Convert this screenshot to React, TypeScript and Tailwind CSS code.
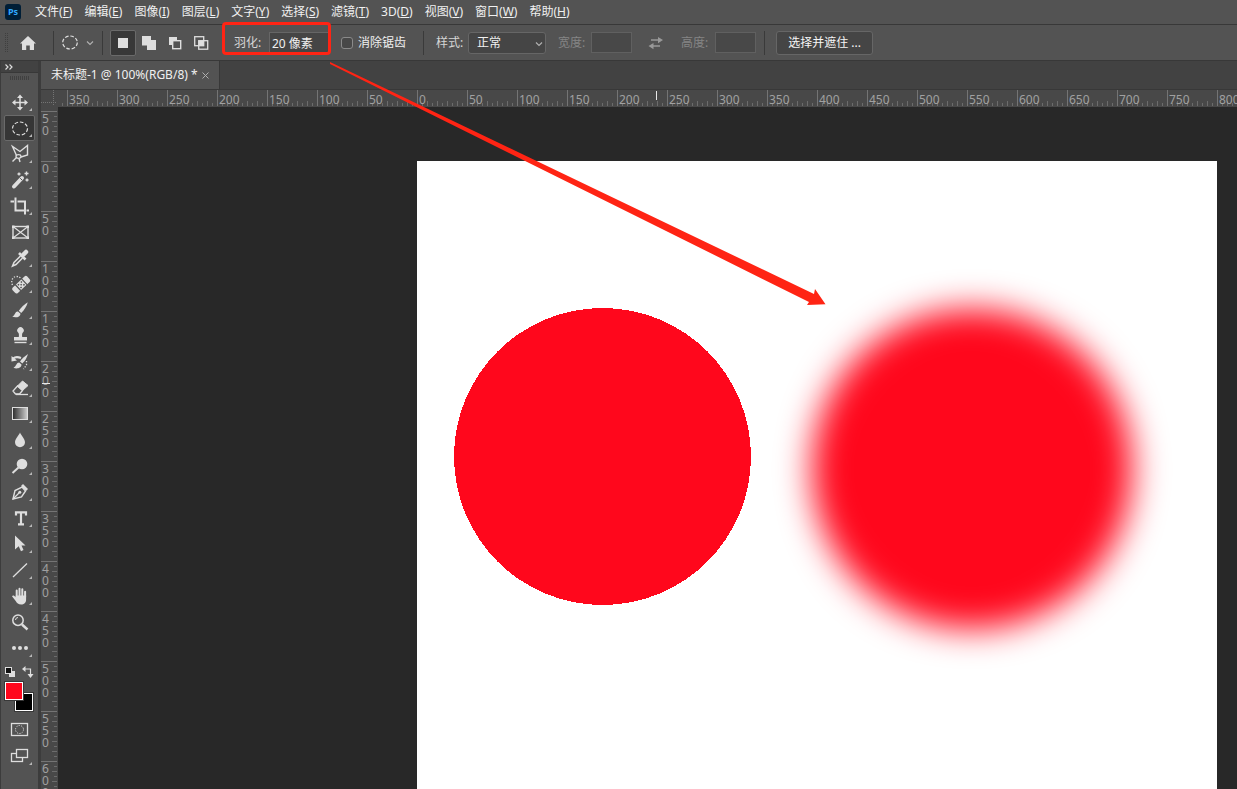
import { useState } from 'react';
import type { ReactNode } from 'react';

// Types
interface MenuEntry {
  label: string;
  hotkey: string;
}

interface Tool {
  id: string;
  title: string;
  icon: ReactNode;
  single?: boolean;
}

const menus: MenuEntry[] = [
  { label: '文件', hotkey: 'F' },
  { label: '编辑', hotkey: 'E' },
  { label: '图像', hotkey: 'I' },
  { label: '图层', hotkey: 'L' },
  { label: '文字', hotkey: 'Y' },
  { label: '选择', hotkey: 'S' },
  { label: '滤镜', hotkey: 'T' },
  { label: '3D', hotkey: 'D' },
  { label: '视图', hotkey: 'V' },
  { label: '窗口', hotkey: 'W' },
  { label: '帮助', hotkey: 'H' },
];

// Every icon is drawn on a 24x24 grid, stroke and fill come from the parent svg
const tools: Tool[] = [
  {
    id: 'move',
    title: '移动工具',
    icon: (
      <>
        <path d="M12 6v13M5.500 12.500h13" strokeWidth="1.500" />
        <path d="M12 4.500l3 3.500H9zM12 20.500l3-3.500H9zM4 12.500L7.500 9.500v6zM20 12.500l-3.500-3v6z" fill="currentColor" stroke="none" />
      </>
    ),
  },
  {
    id: 'marquee',
    title: '椭圆选框工具',
    icon: <ellipse cx="12" cy="12.500" rx="7.500" ry="6.500" strokeDasharray="3.600 1.800" strokeWidth="1.200" />,
  },
  {
    id: 'lasso',
    title: '多边形套索工具',
    icon: (
      <>
        <path d="M8.500 13.500L4.500 4.500 12 9.500l7.500-6v9.500L13 15" strokeWidth="1.400" />
        <ellipse cx="10.500" cy="14.500" rx="2.500" ry="1.800" strokeWidth="1.300" />
        <path d="M8.500 15.500l-4 4M11 16.500l1 3.500" strokeWidth="1.400" />
      </>
    ),
  },
  {
    id: 'wand',
    title: '魔棒工具',
    icon: (
      <>
        <path d="M6 18.500l8-8.500" strokeWidth="4" strokeLinecap="round" />
        <path d="M12.200 10.200l1.800 1.800" stroke="#535353" />
        <path d="M11 4.500v3M9.500 6h3M18.500 3.500v4M16.500 5.500h4M19 10.500v3M17.500 12h3" strokeWidth="1.400" />
      </>
    ),
  },
  {
    id: 'crop',
    title: '裁剪工具',
    icon: <path d="M2.500 7.500h3.500M7.500 3.500v13h8.500M9.500 7.500h7.500v13M18.500 16.500H21" strokeWidth="2" />,
  },
  {
    id: 'frame',
    title: '图框工具',
    single: true,
    icon: (
      <>
        <rect x="5" y="6.500" width="15" height="11.500" strokeWidth="1.400" />
        <path d="M5 6.500l15 11.500M20 6.500L5 18" strokeWidth="1.200" />
        <path d="M4 5.500h2.500v2.500H4zM18.500 5.500H21v2.500h-2.500zM4 16.500h2.500V19H4zM18.500 16.500H21V19h-2.500z" fill="currentColor" stroke="none" />
      </>
    ),
  },
  {
    id: 'eyedropper',
    title: '吸管工具',
    icon: (
      <>
        <path d="M15.500 8.500l2.500-2.500" strokeWidth="4.500" strokeLinecap="round" />
        <path d="M11 7l6.500 6.500" strokeWidth="2.600" />
        <path d="M12.500 10L6 16.500 4.500 20 8 18.500l6.500-6.500" strokeWidth="1.500" />
      </>
    ),
  },
  {
    id: 'healing',
    title: '污点修复画笔工具',
    icon: (
      <>
        <g transform="rotate(-43 13 12.500)">
          <rect x="3" y="9" width="20" height="7.500" rx="2" fill="currentColor" stroke="none" />
          <path d="M8.700 8.500v8.500M17.300 8.500v8.500" stroke="#535353" strokeWidth="1.200" />
          <path d="M10.200 10.200h1.500v1.500h-1.500zM14.200 10.200h1.500v1.500h-1.500zM12.200 12h1.500v1.500h-1.500zM10.200 14h1.500v1.500h-1.500zM14.200 14h1.500v1.500h-1.500z" fill="#535353" stroke="none" />
        </g>
        <path d="M4.500 13C2.500 9.500 4.500 4.500 8.500 4.500c2 0 3 .500 4 1.500" strokeDasharray="1.300 1.500" strokeWidth="1.300" />
      </>
    ),
  },
  {
    id: 'brush',
    title: '画笔工具',
    icon: (
      <>
        <path d="M19.800 4.200c-3.300 2-7 5.300-9 8.600l2.400 2.200c3-2.800 5.500-6.800 6.600-10.800z" fill="currentColor" stroke="none" />
        <path d="M10 13.500c-3.200-.300-2.300 3.500-5.800 5 3 1.700 8.300.800 8.300-2.800z" fill="currentColor" stroke="none" />
      </>
    ),
  },
  {
    id: 'stamp',
    title: '仿制图章工具',
    icon: (
      <>
        <path d="M10.500 9a3.200 3.200 0 1 1 4 0c-.500 1-.500 2-.300 4H19v3.500H6V13h4.800c.200-2 .2-3-.3-4z" fill="currentColor" stroke="none" />
        <path d="M6.500 18.500h12" strokeWidth="1.400" />
      </>
    ),
  },
  {
    id: 'history',
    title: '历史记录画笔工具',
    icon: (
      <>
        <path d="M20 4c-3 2-6.500 5-8 7.500l2.300 2C17 11 19 7.500 20 4z" fill="currentColor" stroke="none" />
        <path d="M11.200 12.500c-3 0-2.500 3.500-5.700 5.300 3.200 1.400 8 .4 8-3.300z" fill="currentColor" stroke="none" />
        <path d="M5 8.500c2.500-2 5.500-1.500 8-.500" strokeWidth="2" />
        <path d="M3.500 6v5.500l5.500-1z" fill="currentColor" stroke="none" />
        <path d="M18.500 11v4l-3 4" strokeDasharray="1.300 1.500" strokeWidth="1.300" />
      </>
    ),
  },
  {
    id: 'eraser',
    title: '橡皮擦工具',
    icon: (
      <>
        <path d="M9.500 10l5-5 5.500 4.500-5.500 5z" fill="currentColor" />
        <path d="M9.500 10l5 4.500-3 3.500H7.500L5 15z" strokeWidth="1.300" />
        <path d="M8 18.500h12" strokeWidth="1.300" />
      </>
    ),
  },
  {
    id: 'gradient',
    title: '渐变工具',
    icon: (
      <>
        <defs>
          <linearGradient id="toolGradient">
            <stop offset="0" stopColor="#2b2b2b" />
            <stop offset="1" stopColor="#d0d0d0" />
          </linearGradient>
        </defs>
        <rect x="4.500" y="5.500" width="15" height="12" fill="url(#toolGradient)" />
      </>
    ),
  },
  {
    id: 'blur',
    title: '模糊工具',
    icon: <path d="M12 4.500c1.200 3 5 6.500 5 9.700a5 5 0 0 1-10 0c0-3.200 3.800-6.700 5-9.700z" fill="currentColor" stroke="none" />,
  },
  {
    id: 'dodge',
    title: '减淡工具',
    icon: (
      <>
        <circle cx="14" cy="10" r="5.300" fill="currentColor" stroke="none" />
        <path d="M10.500 13.500L4.500 19" strokeWidth="2" />
      </>
    ),
  },
  {
    id: 'pen',
    title: '钢笔工具',
    icon: (
      <>
        <path d="M5 19l2-8.500L14 7l3.500 4-4 6z" strokeWidth="1.400" />
        <path d="M13 6l2-2 5 5-2 2z" fill="currentColor" stroke="none" />
        <path d="M5 19l6-6" strokeWidth="1.200" />
        <circle cx="11.800" cy="12.200" r="1.500" fill="currentColor" stroke="none" />
      </>
    ),
  },
  {
    id: 'type',
    title: '横排文字工具',
    icon: <path d="M8 9.500V6.300h10v3.200M13 6v12.500M10 18.300h6" strokeWidth="2.200" />,
  },
  {
    id: 'path',
    title: '路径选择工具',
    icon: <path d="M7 3.500l10.500 10H13.500l2 4.500-2.500 1.200-2.300-5L7 17.500z" fill="currentColor" stroke="none" />,
  },
  {
    id: 'line',
    title: '直线工具',
    icon: <path d="M5 19L19 5.500" strokeWidth="1.300" />,
  },
  {
    id: 'hand',
    title: '抓手工具',
    icon: (
      <>
        <path d="M8.700 13V6.500M11.500 12V4.800M14.300 12V5.300M17.100 13V7.800" strokeWidth="2" strokeLinecap="round" />
        <path d="M7.700 11.500h10.400v4c0 3.500-2 5-5 5-2.800 0-4.200-1.300-5.400-3.500L4 12.300c.8-1.200 2.200-.8 3.700 1z" fill="currentColor" stroke="none" />
      </>
    ),
  },
  {
    id: 'zoom',
    title: '缩放工具',
    single: true,
    icon: (
      <>
        <circle cx="10" cy="10.200" r="5.200" strokeWidth="1.500" />
        <path d="M7.500 10a2.600 2.600 0 0 1 2.500-2.500" />
        <path d="M14 14.500l5.500 5" strokeWidth="2.400" />
      </>
    ),
  },
  {
    id: 'more',
    title: '编辑工具栏',
    icon: (
      <g fill="currentColor" stroke="none">
        <circle cx="6" cy="12" r="2" />
        <circle cx="12" cy="12" r="2" />
        <circle cx="18" cy="12" r="2" />
      </g>
    ),
  },
];

const topLabels = [350, 300, 250, 200, 150, 100, 50, 0, 50, 100, 150, 200, 250, 300, 350, 400, 450, 500, 550, 600, 650, 700, 750, 800];
const sideLabels = [50, 0, 50, 100, 150, 200, 250, 300, 350, 400, 450, 500, 550, 600];

const selectionModes = [
  { id: 'new', title: '新选区', icon: <rect x="3" y="3" width="10" height="10" fill="currentColor" stroke="none" /> },
  { id: 'add', title: '添加到选区', icon: <path d="M1 1h9v4h5v10H6v-4.500H1z" fill="currentColor" stroke="none" /> },
  {
    id: 'subtract',
    title: '从选区减去',
    icon: (
      <>
        <path d="M2 2h8v3H5v5H2z" fill="currentColor" stroke="none" />
        <rect x="5.700" y="5.700" width="8" height="8" strokeWidth="1.400" />
      </>
    ),
  },
  {
    id: 'intersect',
    title: '与选区交叉',
    icon: (
      <>
        <rect x="1.700" y="1.700" width="9" height="9" strokeWidth="1.300" />
        <rect x="5.700" y="5.700" width="9" height="8.500" strokeWidth="1.300" />
        <rect x="5.700" y="5.700" width="5" height="5" fill="currentColor" stroke="none" />
      </>
    ),
  },
];

const Divider = () => <div className="h-6 w-px bg-[#3a3a3a]" />;

const Chevron = ({ className = '' }: { className?: string }) => (
  <svg viewBox="0 0 8 8" fill="none" stroke="#b0b0b0" strokeWidth="1.200" className={`h-2 w-2 ${className}`}>
    <path d="M1 2.500l3 3 3-3" />
  </svg>
);

const MenuBar = () => (
  <header className="flex h-[25px] items-center border-b border-[#383838] bg-[#535353] pl-[5px]">
    <div className="flex h-4 w-4 items-center justify-center rounded-[3px] bg-[#001e36] text-[9px] font-bold text-[#31a8ff]">Ps</div>
    <nav className="ml-[14px] flex gap-3">
      {menus.map((menu) => (
        <button key={menu.label} type="button" className="whitespace-nowrap text-[#f0f0f0]">
          {menu.label}(<span className="underline">{menu.hotkey}</span>)
        </button>
      ))}
    </nav>
  </header>
);

const OptionsBar = () => {
  const [mode, setMode] = useState('new');
  const [feather, setFeather] = useState('20 像素');
  const [antiAlias, setAntiAlias] = useState(false);

  return (
    <div className="flex h-9 items-center overflow-hidden border-b border-[#383838] bg-[#535353] pl-[5px] whitespace-nowrap text-[#d6d6d6]">
      <svg viewBox="0 0 3 20" className="h-5 w-[3px] shrink-0">
        <path d="M0.500 0v20M2.500 0v20" stroke="#3f3f3f" strokeDasharray="1 1" />
      </svg>
      <button type="button" aria-label="主页" className="ml-[7px] flex w-[26px] shrink-0 justify-center text-[#dedede]">
        <svg viewBox="0 0 16 16" fill="currentColor" className="h-4 w-4">
          <path d="M8 1l8 7.500h-2V15H9.800v-4.500H6.200V15H2V8.500H0z" />
        </svg>
      </button>
      <div className="ml-3"><Divider /></div>
      <button type="button" aria-label="工具预设" className="ml-2 flex shrink-0 items-center gap-2">
        <svg viewBox="0 0 16 16" fill="none" stroke="#dedede" strokeWidth="1.200" className="h-4 w-4">
          <ellipse cx="8" cy="7.500" rx="7.300" ry="6.500" strokeDasharray="3.600 1.800" />
        </svg>
        <Chevron />
      </button>
      <div className="ml-2"><Divider /></div>
      <div className="ml-[7px] flex shrink-0">
        {selectionModes.map((item) => (
          <button
            key={item.id}
            type="button"
            aria-label={item.title}
            onClick={() => setMode(item.id)}
            className={`flex h-[26px] w-[26px] items-center justify-center rounded-[2px] border ${mode === item.id ? 'border-[#6a6a6a] bg-[#383838]' : 'border-transparent'}`}
          >
            <svg viewBox="0 0 16 16" fill="none" stroke="currentColor" className="h-4 w-4 shrink-0 text-[#dedede]">
              {item.icon}
            </svg>
          </button>
        ))}
      </div>

      <label htmlFor="feather" className="ml-5 w-[35px] shrink-0">羽化:</label>
      <input
        id="feather"
        value={feather}
        onChange={(e) => setFeather(e.target.value)}
        className="h-[21px] w-[60px] shrink-0 border border-[#666666] bg-[#454545] px-[2px] text-[#f0f0f0] outline-none"
      />
      <input
        id="antialias"
        type="checkbox"
        checked={antiAlias}
        onChange={(e) => setAntiAlias(e.target.checked)}
        className="ml-3 h-3 w-3 shrink-0 appearance-none rounded-[3px] border border-[#8a8a8a] bg-[#484848] checked:bg-[#c0c0c0]"
      />
      <label htmlFor="antialias" className="ml-[5px] text-[#f0f0f0]">消除锯齿</label>
      <div className="ml-[17px]"><Divider /></div>

      <label htmlFor="style" className="ml-3 w-8 shrink-0">样式:</label>
      <div className="relative shrink-0">
        <select id="style" className="block h-[22px] w-[78px] appearance-none rounded-[3px] border border-[#666666] bg-[#454545] px-2 text-[#f0f0f0] outline-none">
          <option>正常</option>
          <option>固定比例</option>
          <option>固定大小</option>
        </select>
        <Chevron className="pointer-events-none absolute top-2 right-[3px]" />
      </div>
      <label htmlFor="width" className="ml-3 w-[33px] shrink-0 text-[#858585]">宽度:</label>
      <input id="width" disabled className="h-[21px] w-[41px] shrink-0 border border-[#606060] bg-[#484848]" />
      <button type="button" aria-label="交换宽度和高度" className="ml-4 shrink-0 text-[#999999]">
        <svg viewBox="0 0 16 16" fill="none" stroke="currentColor" strokeWidth="1.300" className="h-4 w-4">
          <path d="M3 5h8M5 11h7" />
          <path d="M10 2l5 3-5 3.300zM5.500 8L.5 11l5 3.300z" fill="currentColor" stroke="none" />
        </svg>
      </button>
      <label htmlFor="height" className="ml-[17px] w-[34px] shrink-0 text-[#858585]">高度:</label>
      <input id="height" disabled className="h-[21px] w-[41px] shrink-0 border border-[#606060] bg-[#484848]" />
      <div className="ml-2"><Divider /></div>
      <button type="button" className="ml-[11px] h-6 w-[97px] shrink-0 rounded-[3px] border border-[#666666] bg-[#454545] text-[#f5f5f5]">
        选择并遮住 ...
      </button>
    </div>
  );
};

const ColorSwatches = () => (
  <div className="mt-[5px]">
    <div className="flex justify-between px-1">
      <button type="button" aria-label="默认前景色和背景色">
        <svg viewBox="0 0 10 10" className="h-[10px] w-[10px]">
          <rect x="4" y="4" width="6" height="6" fill="#dedede" />
          <rect x="0.500" y="0.500" width="6" height="6" fill="#111111" stroke="#dedede" />
        </svg>
      </button>
      <button type="button" aria-label="切换前景色和背景色">
        <svg viewBox="0 0 12 12" fill="none" stroke="#dedede" strokeWidth="1.200" className="h-3 w-3">
          <path d="M3 3h5.500v6" />
          <path d="M0 3l3.500-3v6zM5.500 8h6L8.500 12z" fill="#dedede" stroke="none" />
        </svg>
      </button>
    </div>
    <div className="relative mt-1 ml-1 h-[29px] w-7">
      <button type="button" aria-label="背景色" className="absolute right-0 bottom-0 h-[18px] w-[18px] border border-white bg-black outline outline-[#383838]" />
      <button type="button" aria-label="前景色" className="absolute top-0 left-0 h-[18px] w-[18px] border border-white bg-[#ff071c] outline outline-[#383838]" />
    </div>
  </div>
);

const ToolIcon = ({ children, single }: { children: ReactNode; single?: boolean }) => (
  <svg viewBox="0 0 24 24" fill="none" stroke="currentColor" className="h-6 w-6 shrink-0 text-[#dedede]">
    {children}
    {!single && <path d="M24 18v3h-3z" fill="#b8b8b8" stroke="none" />}
  </svg>
);

const ToolPanel = () => {
  const [active, setActive] = useState('marquee');

  return (
    <aside className="w-[41px] shrink-0 overflow-hidden border-r-[3px] border-l border-[#3c3c3c] bg-[#535353]">
      <button type="button" aria-label="展开面板" className="flex h-3 w-full items-center border-b border-[#383838] bg-[#424242] pl-1">
        <svg viewBox="0 0 8 6" fill="none" stroke="#dedede" strokeWidth="1.200" className="h-[6px] w-2">
          <path d="M0.500 0.500L3 3 0.500 5.500M4.500 0.500L7 3 4.500 5.500" />
        </svg>
      </button>
      <div className="flex h-4 justify-center pt-[3px]">
        <svg viewBox="0 0 20 4" className="h-1 w-5">
          <path d="M0 2h20" stroke="#404040" strokeWidth="4" strokeDasharray="1 1" />
        </svg>
      </div>
      <div className="flex flex-col items-center">
        {tools.map((tool) => (
          <button
            key={tool.id}
            type="button"
            aria-label={tool.title}
            onClick={() => setActive(tool.id)}
            className={`flex h-[26px] w-[31px] items-center rounded-[2px] border pl-[3px] ${active === tool.id ? 'border-[#6a6a6a] bg-[#363636]' : 'border-transparent'}`}
          >
            <ToolIcon single={tool.single}>{tool.icon}</ToolIcon>
          </button>
        ))}
      </div>
      <ColorSwatches />
      <div className="mt-[6px] flex flex-col items-center">
        <button type="button" aria-label="快速蒙版" className="flex h-[26px] w-[31px] items-center pl-1">
          <ToolIcon single>
            <rect x="3.500" y="5.500" width="16" height="12" strokeWidth="1.300" />
            <circle cx="11.500" cy="11.500" r="4" strokeDasharray="1.200 1.300" />
          </ToolIcon>
        </button>
        <button type="button" aria-label="屏幕模式" className="flex h-[26px] w-[31px] items-center pl-1">
          <ToolIcon>
            <rect x="3.500" y="9.500" width="11" height="8" strokeWidth="1.300" />
            <rect x="8.500" y="5.500" width="11" height="8" fill="#535353" strokeWidth="1.300" />
          </ToolIcon>
        </button>
      </div>
    </aside>
  );
};

// One 50px stretch of the horizontal ruler
const TopSegment = ({ label }: { label: string }) => (
  <div className="relative h-full w-[50px] shrink-0">
    <svg viewBox="0 0 50 17" className="absolute inset-0 h-full w-full" shapeRendering="crispEdges">
      <path d="M0.500 0v16" stroke="#747474" />
      <path d="M5.500 13v3M15.500 13v3M25.500 13v3M35.500 13v3M45.500 13v3M10.500 11v5M20.500 11v5M30.500 11v5M40.500 11v5" stroke="#6c6c6c" />
    </svg>
    <span className="relative block pl-[2px] leading-5">{label}</span>
  </div>
);

// Vertical ruler labels wrap to one digit per line
const SideSegment = ({ label }: { label: string }) => (
  <div className="relative h-[50px] w-full shrink-0">
    <svg viewBox="0 0 17 50" className="absolute inset-0 h-full w-full" shapeRendering="crispEdges">
      <path d="M0 0.500h16" stroke="#747474" />
      <path d="M13 5.500h3M13 15.500h3M13 25.500h3M13 35.500h3M13 45.500h3M11 10.500h5M11 20.500h5M11 30.500h5M11 40.500h5" stroke="#6c6c6c" />
    </svg>
    <span className="relative ml-px block w-2 pt-[2px] leading-3 break-all">{label}</span>
  </div>
);

const TopRuler = () => (
  <div className="flex h-[17px] text-[#a0a0a0]">
    <div className="w-[17px] shrink-0 bg-[#484848]">
      <svg viewBox="0 0 17 17" className="h-[17px] w-[17px]" shapeRendering="crispEdges">
        <path d="M0 12.500h16M12.500 0v16" stroke="#747474" strokeDasharray="1 1" />
      </svg>
    </div>
    <div className="relative flex min-w-0 flex-1 overflow-hidden bg-[#484848]">
      <div className="flex w-[9px] shrink-0 justify-end overflow-hidden">
        <TopSegment label="" />
      </div>
      {topLabels.map((value, i) => (
        <TopSegment key={i} label={String(value)} />
      ))}
      {/* pointer position */}
      <div className="absolute top-px left-[598px] h-[9px] w-px bg-[#e8e8e8]" />
    </div>
  </div>
);

const SideRuler = () => (
  <div className="relative flex w-[17px] shrink-0 flex-col overflow-hidden bg-[#484848] pt-1 text-[#a0a0a0]">
    {sideLabels.map((value, i) => (
      <SideSegment key={i} label={String(value)} />
    ))}
    <div className="absolute top-[276px] left-px h-px w-2 bg-[#e8e8e8]" />
  </div>
);

const Artboard = () => (
  <div className="min-w-0 flex-1 overflow-hidden bg-[#282828] pt-[54px] pl-[359px]">
    <svg viewBox="0 0 800 800" className="h-[800px] w-[800px] max-w-none bg-white">
      <defs>
        <filter id="feather20" x="-30%" y="-30%" width="160%" height="160%" colorInterpolationFilters="sRGB">
          <feGaussianBlur stdDeviation="17" />
        </filter>
      </defs>
      <circle cx="185.500" cy="295.500" r="148.500" fill="#ff071c" shapeRendering="crispEdges" />
      <circle cx="555" cy="308" r="160" fill="#ff071c" filter="url(#feather20)" />
    </svg>
  </div>
);

// Red callout box and arrow drawn over the window
const Annotation = () => (
  <svg className="pointer-events-none absolute inset-0 h-full w-full">
    <rect x="223.500" y="23.500" width="106" height="30" rx="2.500" fill="none" stroke="#ff2414" strokeWidth="3" />
    <path d="M330 62L814 294l1-5 10.500 15.300L807 305l2-3L330 64z" fill="#ff2414" />
  </svg>
);

const App = () => {
  return (
    <div className="relative flex h-screen flex-col overflow-hidden bg-[#424242] font-['Noto_Sans','Noto_Sans_CJK_SC',sans-serif] text-[12px] leading-4">
      <MenuBar />
      <OptionsBar />
      <div className="flex min-h-0 flex-1">
        <ToolPanel />
        <main className="flex min-w-0 flex-1 flex-col">
          <div className="flex h-[29px] border-b border-[#383838] bg-[#424242]">
            <div className="flex items-center gap-1 border-r border-[#383838] bg-[#535353] px-[10px] whitespace-nowrap text-[#f0f0f0]">
              <span>未标题-1 @ 100%(RGB/8) *</span>
              <button type="button" aria-label="关闭">
                <svg viewBox="0 0 7 7" stroke="#b0b0b0" className="h-[7px] w-[7px]">
                  <path d="M0.500 0.500l6 6M6.500 0.500l-6 6" />
                </svg>
              </button>
            </div>
          </div>
          <TopRuler />
          <div className="flex min-h-0 flex-1">
            <SideRuler />
            <Artboard />
          </div>
        </main>
      </div>
      <Annotation />
    </div>
  );
};

export default App;
